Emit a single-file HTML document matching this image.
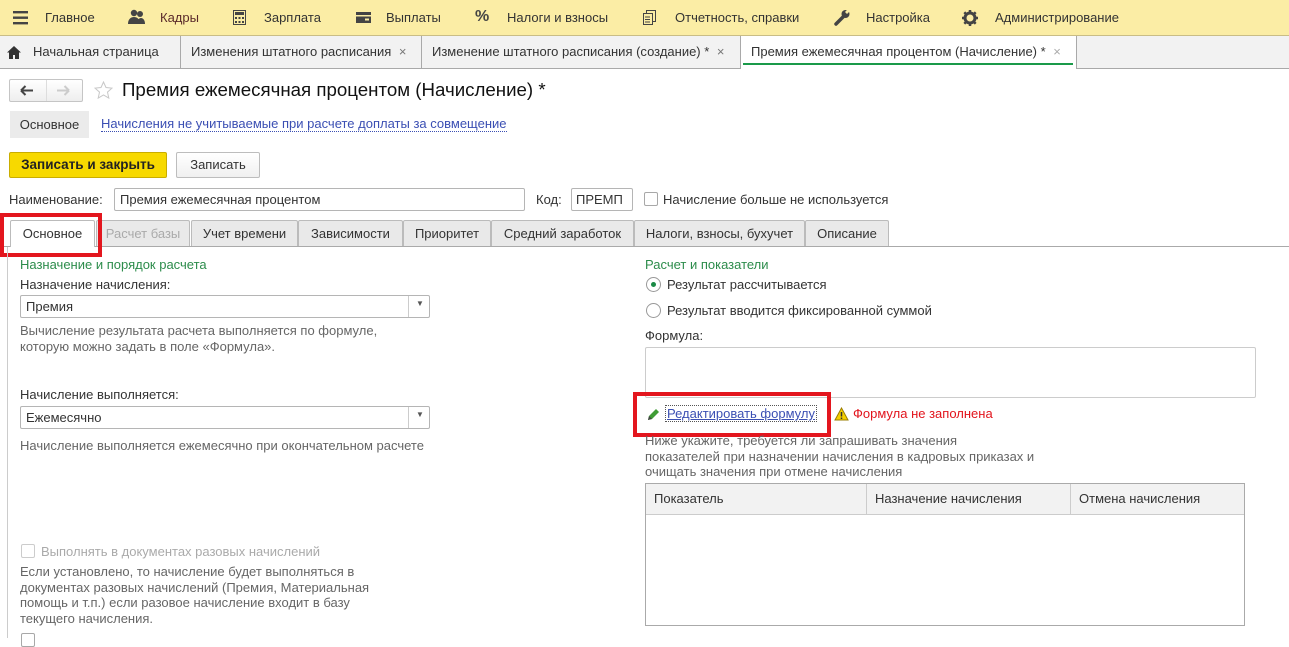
<!DOCTYPE html>
<html><head><meta charset="utf-8"><style>
*{box-sizing:border-box;margin:0;padding:0}
body{width:1289px;height:638px;overflow:hidden;background:#fff;font-family:"Liberation Sans",Arial,sans-serif;font-size:13px;color:#333;position:relative}
.a{position:absolute;white-space:nowrap}
.top{position:absolute;left:0;top:0;width:1289px;height:36px;background:#fbeda5;border-bottom:1px solid #c9bd86}
.tabs{position:absolute;left:0;top:36px;width:1289px;height:33px;background:#f2f2f2;border-bottom:1px solid #a9a9a9}
.tb{position:absolute;top:36px;height:32px;border-right:1px solid #a9a9a9;line-height:32px;padding-left:10px}
.inp{position:absolute;border:1px solid #b5b5b5;border-radius:2px;background:#fff;height:23px;line-height:21px;padding-left:5px}
.ftab{position:absolute;top:220px;height:26px;border:1px solid #bbb;border-bottom:none;background:#e9e9e9;line-height:25px;text-align:center;border-radius:2px 2px 0 0}
.g{color:#2c8c4b}
.h{color:#666}
.cb{position:absolute;width:14px;height:14px;border:1px solid #a8a8a8;border-radius:2px;background:#fff}
.rd{position:absolute;width:15px;height:15px;border:1px solid #999;border-radius:50%;background:#fff}
.red{position:absolute;border:4px solid #e3161e}
</style></head><body>
<div class="top"></div>
<svg class="a" style="left:13px;top:11px" width="16" height="14"><rect y="0" width="15" height="2.4" fill="#444"/><rect y="5.5" width="15" height="2.4" fill="#444"/><rect y="11" width="15" height="2.4" fill="#444"/></svg>
<div class="a" style="left:45px;top:10px">Главное</div>
<svg class="a" style="left:128px;top:9px" width="18" height="16"><circle cx="6" cy="4" r="3.2" fill="#444"/><circle cx="12" cy="5" r="3" fill="#444"/><path d="M0 15c0-5 3-7 6-7s6 2 6 7z" fill="#444"/><path d="M9 15c0-4 2-6 4-6s4 2 4 6z" fill="#444"/></svg>
<div class="a" style="left:160px;top:10px;color:#5a2a2a">Кадры</div>
<svg class="a" style="left:233px;top:10px" width="13" height="15"><rect x="0.5" y="0.5" width="12" height="14" fill="none" stroke="#444"/><rect x="2" y="2" width="9" height="3" fill="#444"/><g fill="#444"><rect x="2" y="7" width="2" height="2"/><rect x="5.5" y="7" width="2" height="2"/><rect x="9" y="7" width="2" height="2"/><rect x="2" y="11" width="2" height="2"/><rect x="5.5" y="11" width="2" height="2"/><rect x="9" y="11" width="2" height="2"/></g></svg>
<div class="a" style="left:264px;top:10px">Зарплата</div>
<svg class="a" style="left:356px;top:12px" width="15" height="11"><rect width="15" height="11" fill="#444"/><rect x="0" y="3" width="15" height="1.5" fill="#fbeda5"/><rect x="9" y="6.5" width="4" height="2" fill="#fbeda5"/></svg>
<div class="a" style="left:386px;top:10px">Выплаты</div>
<div class="a" style="left:475px;top:8px;font-size:16px;font-weight:bold;color:#444">%</div>
<div class="a" style="left:507px;top:10px">Налоги и взносы</div>
<svg class="a" style="left:643px;top:10px" width="13" height="15"><rect x="3.5" y="0.5" width="9" height="11" fill="none" stroke="#444"/><rect x="0.5" y="3.5" width="9" height="11" fill="#fbeda5" stroke="#444"/><path d="M2 7h5M2 9.5h5M2 12h5" stroke="#444"/></svg>
<div class="a" style="left:675px;top:10px">Отчетность, справки</div>
<svg class="a" style="left:834px;top:9px" width="16" height="17"><path d="M2 15L9 8" stroke="#444" stroke-width="3.5" stroke-linecap="round"/><circle cx="11.5" cy="5" r="4" fill="#444"/><path d="M11 3l3-3 2 2-3 3z" fill="#fbeda5"/></svg>
<div class="a" style="left:866px;top:10px">Настройка</div>
<svg class="a" style="left:962px;top:10px" width="16" height="16"><circle cx="8" cy="8" r="5" fill="none" stroke="#444" stroke-width="3"/><g stroke="#444" stroke-width="2.5"><path d="M8 0v3M8 13v3M0 8h3M13 8h3M2.3 2.3l2.1 2.1M11.6 11.6l2.1 2.1M2.3 13.7l2.1-2.1M11.6 4.4l2.1-2.1"/></g></svg>
<div class="a" style="left:995px;top:10px">Администрирование</div>

<div class="tabs"></div>
<svg class="a" style="left:7px;top:46px" width="14" height="13"><path d="M7 0L0 6.5h2V13h4V9h2v4h4V6.5h2z" fill="#333"/></svg>
<div class="tb" style="left:0;width:181px;padding-left:33px">Начальная страница</div>
<div class="tb" style="left:181px;width:241px">Изменения штатного расписания <span style="color:#777;margin-left:4px">×</span></div>
<div class="tb" style="left:422px;width:319px">Изменение штатного расписания (создание) * <span style="color:#777;margin-left:4px">×</span></div>
<div class="tb" style="left:741px;width:336px;background:#fff;height:33px">Премия ежемесячная процентом (Начисление) * <span style="color:#aaa;margin-left:4px">×</span></div>
<div class="a" style="left:743px;top:63px;width:330px;height:2px;background:#1a9a4a"></div>

<div class="a" style="left:9px;top:79px;width:74px;height:23px;border:1px solid #c5c5c5;border-radius:2px;background:linear-gradient(#fff,#eee)"></div>
<div class="a" style="left:46px;top:80px;width:1px;height:21px;background:#ddd"></div>
<svg class="a" style="left:20px;top:85px" width="14" height="11"><path d="M1 5.5h12M1 5.5l4.5-4.5M1 5.5l4.5 4.5" stroke="#444" stroke-width="2" fill="none"/></svg>
<svg class="a" style="left:56px;top:85px" width="14" height="11"><path d="M1 5.5h12M13 5.5l-4.5-4.5M13 5.5l-4.5 4.5" stroke="#ccc" stroke-width="2" fill="none"/></svg>
<svg class="a" style="left:94px;top:81px" width="19" height="18"><path d="M9.5 1l2.5 5.5 6 .6-4.5 4 1.3 6-5.3-3.1-5.3 3.1 1.3-6-4.5-4 6-.6z" fill="none" stroke="#c8c8c8"/></svg>
<div class="a" style="left:122px;top:79px;font-size:18.7px;color:#111">Премия ежемесячная процентом (Начисление) *</div>

<div class="a" style="left:10px;top:111px;width:79px;height:27px;background:#ebebeb;line-height:27px;text-align:center">Основное</div>
<div class="a" style="left:101px;top:117px;color:#3b4fb3;border-bottom:1px dotted #3b4fb3;line-height:14px">Начисления не учитываемые при расчете доплаты за совмещение</div>

<div class="a" style="left:9px;top:152px;width:158px;height:26px;background:#f7d900;border:1px solid #c9ad00;border-radius:2px;line-height:24px;text-align:center;color:#222;font-weight:bold;font-size:13.5px">Записать и закрыть</div>
<div class="a" style="left:176px;top:152px;width:84px;height:26px;background:linear-gradient(#fff,#f0f0f0);border:1px solid #bdbdbd;border-radius:2px;line-height:24px;text-align:center">Записать</div>

<div class="a" style="left:9px;top:192px">Наименование:</div>
<div class="inp" style="left:114px;top:188px;width:411px">Премия ежемесячная процентом</div>
<div class="a" style="left:536px;top:192px">Код:</div>
<div class="inp" style="left:571px;top:188px;width:62px;padding-left:4px">ПРЕМП</div>
<div class="cb" style="left:644px;top:192px"></div>
<div class="a" style="left:663px;top:192px">Начисление больше не используется</div>

<div class="a" style="left:0;top:246px;width:1289px;height:1px;background:#aaa"></div>
<div class="ftab" style="left:10px;width:85px;background:#fff;height:27px">Основное</div>
<div class="ftab" style="left:96px;width:94px;color:#aaa">Расчет базы</div>
<div class="ftab" style="left:191px;width:107px">Учет времени</div>
<div class="ftab" style="left:298px;width:105px">Зависимости</div>
<div class="ftab" style="left:403px;width:88px">Приоритет</div>
<div class="ftab" style="left:491px;width:143px">Средний заработок</div>
<div class="ftab" style="left:634px;width:171px">Налоги, взносы, бухучет</div>
<div class="ftab" style="left:805px;width:84px">Описание</div>
<div class="red" style="left:0;top:213px;width:102px;height:44px"></div>
<div class="a" style="left:7px;top:247px;width:1px;height:391px;background:#ccc"></div>

<div class="a g" style="left:20px;top:257px">Назначение и порядок расчета</div>
<div class="a" style="left:20px;top:277px">Назначение начисления:</div>
<div class="inp" style="left:20px;top:295px;width:410px">Премия</div>
<div class="a" style="left:408px;top:296px;width:1px;height:21px;background:#ccc"></div>
<div class="a" style="left:416px;top:299px;font-size:8px;color:#555">▼</div>
<div class="a h" style="left:20px;top:323px;line-height:16px">Вычисление результата расчета выполняется по формуле,<br>которую можно задать в поле «Формула».</div>
<div class="a" style="left:20px;top:387px">Начисление выполняется:</div>
<div class="inp" style="left:20px;top:406px;width:410px">Ежемесячно</div>
<div class="a" style="left:408px;top:407px;width:1px;height:21px;background:#ccc"></div>
<div class="a" style="left:416px;top:410px;font-size:8px;color:#555">▼</div>
<div class="a h" style="left:20px;top:438px">Начисление выполняется ежемесячно при окончательном расчете</div>
<div class="cb" style="left:21px;top:544px;border-color:#ccc"></div>
<div class="a" style="left:41px;top:544px;color:#aaa">Выполнять в документах разовых начислений</div>
<div class="a h" style="left:20px;top:564px;line-height:15.5px">Если установлено, то начисление будет выполняться в<br>документах разовых начислений (Премия, Материальная<br>помощь и т.п.) если разовое начисление входит в базу<br>текущего начисления.</div>
<div class="cb" style="left:21px;top:633px"></div>

<div class="a g" style="left:645px;top:257px">Расчет и показатели</div>
<div class="rd" style="left:646px;top:277px"></div>
<div class="a" style="left:651px;top:282px;width:5px;height:5px;border-radius:50%;background:#1a8a45"></div>
<div class="a" style="left:667px;top:277px">Результат рассчитывается</div>
<div class="rd" style="left:646px;top:303px"></div>
<div class="a" style="left:667px;top:303px">Результат вводится фиксированной суммой</div>
<div class="a" style="left:645px;top:328px">Формула:</div>
<div class="a" style="left:645px;top:347px;width:611px;height:51px;border:1px solid #ccc;border-radius:2px"></div>
<svg class="a" style="left:646px;top:407px" width="14" height="15"><path d="M2 13l1-4 7-7 3 3-7 7z" fill="#3f9c35"/><path d="M2 13l1-4 3 3z" fill="#444"/></svg>
<div class="a" style="left:666px;top:406px;color:#3b4fb3;text-decoration:underline;outline:1px dotted #555;padding:0 1px">Редактировать формулу</div>
<svg class="a" style="left:834px;top:407px" width="15" height="14"><path d="M7.5 1L14 13H1z" fill="#f5d000" stroke="#9a7d00"/><path d="M7.5 5v4.5M7.5 10.5v1.5" stroke="#333" stroke-width="1.5"/></svg>
<div class="a" style="left:853px;top:406px;color:#e2141c">Формула не заполнена</div>
<div class="red" style="left:633px;top:392px;width:198px;height:45px"></div>
<div class="a h" style="left:645px;top:433px;line-height:15.5px">Ниже укажите, требуется ли запрашивать значения<br>показателей при назначении начисления в кадровых приказах и<br>очищать значения при отмене начисления</div>

<div class="a" style="left:645px;top:483px;width:600px;height:143px;border:1px solid #aaa"></div>
<div class="a" style="left:646px;top:484px;width:598px;height:31px;background:#f2f2f2;border-bottom:1px solid #ccc"></div>
<div class="a" style="left:866px;top:484px;width:1px;height:31px;background:#ccc"></div>
<div class="a" style="left:1070px;top:484px;width:1px;height:31px;background:#ccc"></div>
<div class="a" style="left:654px;top:491px">Показатель</div>
<div class="a" style="left:875px;top:491px">Назначение начисления</div>
<div class="a" style="left:1079px;top:491px">Отмена начисления</div>
</body></html>
